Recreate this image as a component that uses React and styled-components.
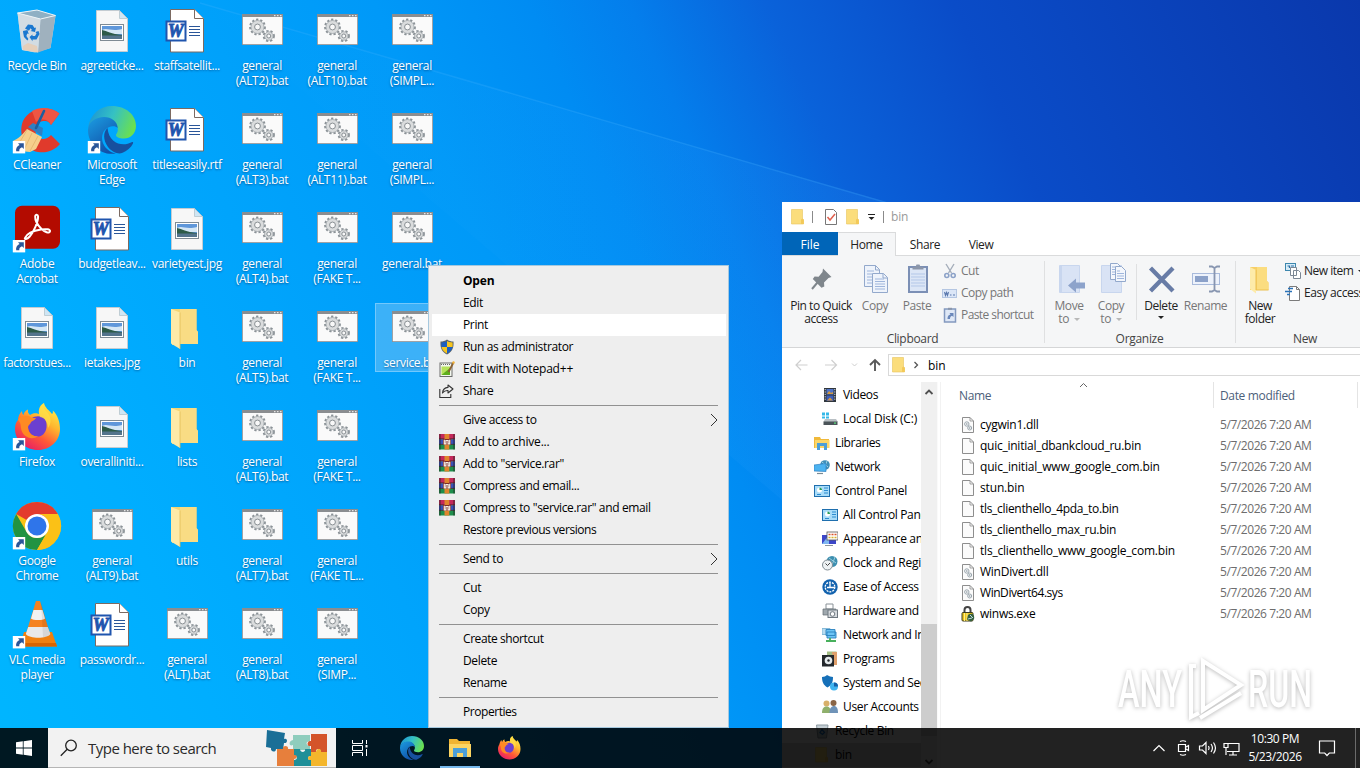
import React from 'react'
import styled, { createGlobalStyle } from 'styled-components'

const GlobalStyle = createGlobalStyle`
  * {
    box-sizing: border-box;
  }

  body {
    margin: 0;
    overflow: hidden;
    font-family: 'Open Sans', 'Noto Sans', sans-serif;
    font-size: 12px;
    letter-spacing: -0.4px;
    color: #000;
  }

  svg {
    display: block;
    flex: none;
  }
`

const Screen = styled.div`
  position: relative;
  width: 1360px;
  height: 768px;
  overflow: hidden;
  background: linear-gradient(66deg, #00b6ff 0%, #00aeff 14%, #00a4fc 28%, #0099f8 42%, #008cf3 51%, #047eec 57%, #0a62da 65%, #0a4cc8 76%, #0a38ac 100%);
`

const Rays = styled.svg`
  position: absolute;
  inset: 0;
`

/* ---------- desktop ---------- */

const DesktopGrid = styled.div`
  position: relative;
  display: grid;
  grid-auto-flow: column;
  grid-template-rows: repeat(7, 99px);
  grid-auto-columns: 75px;
  width: max-content;
`

const Shortcut = styled.div`
  padding: 1px 0 0 1px;
  height: 69px;
  margin-top: 6px;
  background: ${p => (p.$selected ? 'rgba(120, 195, 245, 0.5)' : 'transparent')};
  box-shadow: ${p => (p.$selected ? 'inset 0 0 0 1px rgba(150, 215, 255, 0.6)' : 'none')};
`

const Picture = styled.div`
  width: 48px;
  height: 48px;
  margin-left: 12px;
`

const Caption = styled.div`
  margin: 3px -5px 0 -7px;
  color: #fff;
  line-height: 15px;
  text-align: center;
  white-space: pre;
  letter-spacing: -0.32px;
  text-shadow: 0 1px 2px rgba(0, 40, 90, 0.55);
`

const LinkArrow = () => (
  <g>
    <rect x="-0.2" y="35" width="12.4" height="12.4" fill="#fff" />
    <path d="M3.200 45.200c-.6-3 .8-5.300 3.400-6.300L5 37.300h5.800v5.800L9 41.300c-2 .7-2.900 2-2.700 3.900z" fill="#2a5699" />
  </g>
)

const Icon48 = ({ children, link }) => (
  <svg width="48" height="48" viewBox="0 0 48 48" overflow="visible">
    {children}
    {link && <LinkArrow />}
  </svg>
)

const RecycleBin = () => (
  <Icon48>
    <path d="M4.500 6 9 43l13 2.500L37.500 41 42.500 9 24 3z" fill="#cfd9df" opacity=".92" />
    <path d="M4.500 6 24 3l18.500 5.500-15 3.500z" fill="#8fb0c4" />
    <path d="M27.500 12 42.500 8.500 37.500 41 25 45.500z" fill="#9fb1be" />
    <path d="M4.500 6 27.500 12 25 45.500 9 43z" fill="#d4dde3" opacity=".9" />
    <path d="M4.500 6 24 3l18.500 5.500-15 3.500z" fill="none" stroke="#eef4f7" strokeWidth="1" />
    <path d="M10 39l5-3 9 3 1 6.500L10 43z" fill="#edc9a8" opacity=".7" />
    <g fill="#1a78d0">
      <path d="M12 21.500l3-4 4.500.5 2 3 1.500-.5-1 4.500-4.500-1 1.500-1-1.500-1.800-1.500 2.500z" />
      <path d="M10 24l4.500-1 1.200 4-1.500-.6-.8 2.500 2 3-1 1.500-3.400-3.400-.8-4z" />
      <path d="M16.500 30l3-2.500v1.500h2.500l1.500-2.500-1-1.500 3-1 1 3-3 5.500h-4v1.800z" />
    </g>
  </Icon48>
)

const Photo = () => (
  <Icon48>
    <path d="M8.500 3.500h23l8 8v33h-31z" fill="#f7f7f7" stroke="#c4ccd2" />
    <path d="M31.500 3.500v8h8z" fill="#cfe6f4" stroke="#b6c4cc" strokeWidth=".8" />
    <rect x="12.500" y="17.500" width="23" height="16" fill="#fff" stroke="#7f8b94" />
    <rect x="14" y="19" width="20" height="13" fill="#5f97da" />
    <path d="M14 23c5-3 9 2 20-1v5H14z" fill="#d5e7f5" />
    <path d="M14 23c5 1 9 4 20 5v1H14z" fill="#2d5a47" />
    <path d="M14 28.500h20V32H14z" fill="#54748c" />
  </Icon48>
)

const WordDoc = () => (
  <Icon48>
    <path d="M7.500 2.500h24l9 9v33.500h-33z" fill="#fff" stroke="#7b6a62" />
    <path d="M31.500 2.500v9h9" fill="#fff" stroke="#7b6a62" />
    <path d="M26 19.500h11M26 22.500h11M26 25.500h11M26 28.500h11" stroke="#2a5699" strokeWidth="1.200" />
    <rect x="3.500" y="14.500" width="19" height="19" fill="#fff" stroke="#1f55ae" strokeWidth="2" />
    <text x="4.800" y="30.200" fontFamily="Liberation Serif, serif" fontWeight="bold" fontStyle="italic" fontSize="18" letterSpacing="0" stroke="#1f55ae" strokeWidth=".9" fill="#1f55ae">W</text>
  </Icon48>
)

const Folder = () => (
  <Icon48>
    <path d="M8 5h25.500v21l1.500 2v12H16l-7 1z" fill="#f3d474" />
    <path d="M17 5h16.500v21l1.500 2v12H17z" fill="#f9dc84" />
    <path d="M8 5l9 3.500V45l-9-5.500z" fill="#fdeaa8" />
    <path d="M17 8.500V45" stroke="#e2bb55" strokeWidth=".8" />
  </Icon48>
)

const gear = (cx, cy, r) => (
  <g>
    <circle cx={cx} cy={cy} r={r} fill="none" stroke="#8b9297" strokeWidth="2.200" strokeDasharray="2.200 1.900" />
    <circle cx={cx} cy={cy} r={r - 0.800} fill="#dadcdd" stroke="#a2a8ac" strokeWidth=".8" />
    <circle cx={cx} cy={cy} r={r * 0.4} fill="#f8f8f8" stroke="#7e8589" strokeWidth=".9" />
  </g>
)

const Batch = () => (
  <Icon48>
    <rect x="4" y="7" width="41" height="31" fill="#8a8d90" />
    <rect x="4.800" y="10" width="39.400" height="27.200" fill="#fafafa" />
    <path d="M36 8.700h1.500M39 8.700h1.500M42 8.700h1.500" stroke="#e6e6e6" strokeWidth="1.200" />
    {gear(19.500, 20, 7.300)}
    {gear(30.800, 29, 5)}
  </Icon48>
)

const CCleaner = () => (
  <Icon48 link>
    <path d="M46.500 7.500C36-1 17 1 10 15c-5 12 1 29 15 31 9 1.500 17-2 22-8l-9-9c-5 6-13 5-15-1-2-8 3-14 9-13 3 0 5 2 6 4z" fill="#e03a2c" />
    <path d="M46.500 7.500C38 1 27 .5 19 5l4 11c5-4 12-3 15 3z" fill="#ee5644" />
    <path d="M14 23 29 31 23 43 17 46 7 45 0 35C5 33 10 28 14 23z" fill="#f6cf8c" />
    <path d="M14 24 5 39M19 27 11 44M25 30l-8 15" stroke="#e2b36c" strokeWidth=".8" />
    <path d="M15 21l5-4 10 5-1 8z" fill="#2f7fc2" />
    <path d="M31 5 23 22" stroke="#1c5f9e" strokeWidth="2.600" strokeLinecap="round" />
  </Icon48>
)

const EdgeArt = () => (
  <g>
    <defs>
      <linearGradient id="edgeTop" x1="0" x2="1" y1=".2" y2=".5">
        <stop offset="0" stopColor="#1c93d4" />
        <stop offset=".5" stopColor="#35c1c3" />
        <stop offset="1" stopColor="#6be04f" />
      </linearGradient>
      <linearGradient id="edgeSide" x1="0" x2=".6" y1="0" y2="1">
        <stop offset="0" stopColor="#1b9de2" />
        <stop offset="1" stopColor="#1150a8" />
      </linearGradient>
    </defs>
    <path d="M0 22C2 8 12 0 24 0c14 0 24 9 24 20 0 8-6 12.500-12 12.500-5 0-8-1.500-8-3.500 0-1 1.800-2 1.800-5.500 0-6-6-11.500-13.500-11.500C8 12 2 17 0 22z" fill="url(#edgeTop)" />
    <path d="M0 24c0-8 8-13 16-13 7.500 0 13 4 13.800 11C27 19 20 19.500 16 25c-5 8 0 20 12 22.500C13 50 0 39 0 24z" fill="url(#edgeSide)" />
    <path d="M19.500 22C15 26 15 34 20 41c4 5 10 7.500 14 6 5-2 9-5.500 11-9.500.6-1.200-.4-1.800-1.400-1.200C35 41 21 38 19.500 22z" fill="#17509f" />
  </g>
)

const Edge = () => (
  <Icon48 link>
    <EdgeArt />
  </Icon48>
)

const Acrobat = () => (
  <Icon48 link>
    <rect x="2" y=".7" width="45" height="43" rx="7" fill="#b30b00" />
    <path d="M12 33c2-4.500 9-7.500 16-8.500 5-.6 9.500-.4 9 1.800-.6 2.500-5.500.6-8.500-2.300-3.500-3.500-6.500-9-6.300-12.500.2-2.500 2.900-2.200 2.900.3 0 5-4 14.700-8.600 20-2.500 2.700-5.500 2.700-4.500 1.200z" fill="none" stroke="#fff" strokeWidth="2" strokeLinejoin="round" />
  </Icon48>
)

const FirefoxArt = () => (
  <g>
    <defs>
      <linearGradient id="foxBody" x1=".85" x2=".25" y1=".05" y2="1">
        <stop offset="0" stopColor="#fff04a" />
        <stop offset=".35" stopColor="#ffb52e" />
        <stop offset=".65" stopColor="#ff5a36" />
        <stop offset="1" stopColor="#e61a6a" />
      </linearGradient>
    </defs>
    <path d="M5 17c0-4 2-7 4-9 0 2 .5 3 1.500 4C11 9 13 7.500 15 6.500c-.5 2 .2 4 2 5.500 3-2.500 7-2 9-1C25 5 28 1.500 31 0c1 5 5 7 8 11 1-.5 1-2 .8-3.500C45 12 47 20 47 26c0 12-10 21-22 21S2 38 2 26c0-4 1-7 3-9z" fill="url(#foxBody)" />
    <path d="M15 21c2-7 9-9.500 15-6.500 3 2 4 6 3.500 10-.8 6-5 9.500-10 9-5-.3-9-4-8.500-12.500z" fill="#6b3fd0" />
    <path d="M5 17c1-3 5-5 11-4 2 2 4 2 7 2-1 2-3 2.500-5 4 0 2-3 3-3 5 0 5 4 10 10 9-6 5-16 1-17-8-.4-3 0-5-3-8z" fill="#ff8a23" />
    <path d="M27 14c5 1 8 5 8 11 4-5 3-12-1-16-3-3-4-5-3-9-4 3-6 8-4 14z" fill="#ffe14a" opacity=".7" />
  </g>
)

const Firefox = () => (
  <Icon48 link>
    <FirefoxArt />
  </Icon48>
)

const Chrome = () => (
  <Icon48 link>
    <circle cx="24" cy="24" r="24" fill="#fbc116" />
    <path d="M24 24 3.200 12A24 24 0 0 1 44.800 12z" fill="#e33b2e" />
    <path d="M13.600 30A12 12 0 0 0 34.400 30L24 48A24 24 0 0 1 3.200 12z" fill="#229342" />
    <path d="M44.800 12H24A12 12 0 0 1 34.400 30L24 48A24 24 0 0 0 44.800 12z" fill="#fbc116" />
    <circle cx="24" cy="24" r="12" fill="#fff" />
    <circle cx="24" cy="24" r="9.500" fill="#2f75ea" />
  </Icon48>
)

const Vlc = () => (
  <Icon48 link>
    <path d="M11 31h28l5 14.500H7z" fill="#f08010" />
    <path d="M7 44l1-2h35l1 3.500H7z" fill="#d96400" />
    <path d="M23 0h4l9.500 31c-2 5-21 5-23 0z" fill="#f58220" />
    <path d="M20.500 9h9l2.500 8.500c-2 2-12 2-14 0z" fill="#f2f2f2" />
    <path d="M15.200 26h19.600l2.500 7c-3 5-21 5-24.500 0z" fill="#e9e9e9" />
    <path d="M28 1l9 32c-1 2-4 3-7 3.300z" fill="#000" opacity=".08" />
  </Icon48>
)

const desktopItems = [
  ['Recycle Bin', RecycleBin],
  ['CCleaner', CCleaner],
  ['Adobe\nAcrobat', Acrobat],
  ['factorstues...', Photo],
  ['Firefox', Firefox],
  ['Google\nChrome', Chrome],
  ['VLC media\nplayer', Vlc],
  ['agreeticke...', Photo],
  ['Microsoft\nEdge', Edge],
  ['budgetleav...', WordDoc],
  ['ietakes.jpg', Photo],
  ['overalliniti...', Photo],
  ['general\n(ALT9).bat', Batch],
  ['passwordr...', WordDoc],
  ['staffsatellit...', WordDoc],
  ['titleseasily.rtf', WordDoc],
  ['varietyest.jpg', Photo],
  ['bin', Folder],
  ['lists', Folder],
  ['utils', Folder],
  ['general\n(ALT).bat', Batch],
  ['general\n(ALT2).bat', Batch],
  ['general\n(ALT3).bat', Batch],
  ['general\n(ALT4).bat', Batch],
  ['general\n(ALT5).bat', Batch],
  ['general\n(ALT6).bat', Batch],
  ['general\n(ALT7).bat', Batch],
  ['general\n(ALT8).bat', Batch],
  ['general\n(ALT10).bat', Batch],
  ['general\n(ALT11).bat', Batch],
  ['general\n(FAKE T...', Batch],
  ['general\n(FAKE T...', Batch],
  ['general\n(FAKE T...', Batch],
  ['general\n(FAKE TL...', Batch],
  ['general\n(SIMP...', Batch],
  ['general\n(SIMPL...', Batch],
  ['general\n(SIMPL...', Batch],
  ['general.bat', Batch],
  ['service.bat', Batch, true],
]

const Desktop = () => (
  <DesktopGrid>
    {desktopItems.map(([name, Art, selected], i) => (
      <Shortcut key={i} $selected={selected}>
        <Picture><Art /></Picture>
        <Caption>{name}</Caption>
      </Shortcut>
    ))}
  </DesktopGrid>
)

/* ---------- explorer window ---------- */

const Window = styled.div`
  position: absolute;
  left: 782px;
  top: 202px;
  width: 640px;
  height: 566px;
  display: flex;
  flex-direction: column;
  background: #fff;
`

const TitleBar = styled.div`
  display: flex;
  align-items: center;
  height: 30px;
  padding: 0 0 1px 8px;
  color: #999;
  letter-spacing: -0.2px;
`

const TitleRule = styled.span`
  width: 1px;
  height: 12px;
  margin: 0 ${p => p.$after}px 0 ${p => p.$before}px;
  background: #8a8a8a;
`

const TitleGap = styled.span`
  width: 6px;
`

const Tabs = styled.div`
  display: flex;
  height: 24px;
  border-bottom: 1px solid #dadbdc;
`

const Tab = styled.div`
  width: ${p => p.$width}px;
  height: ${p => (p.$current ? 24 : 23)}px;
  line-height: ${p => (p.$current ? 23 : 25)}px;
  text-align: center;
  letter-spacing: ${p => (p.$file ? 0 : -0.4)}px;
  color: ${p => (p.$file ? '#fff' : '#222')};
  background: ${p => (p.$file ? '#0065b8' : p.$current ? '#f5f6f7' : 'transparent')};
  border: 0 solid #dadbdc;
  border-width: ${p => (p.$current ? '1px 1px 0 0' : '0')};
`

const Ribbon = styled.div`
  display: flex;
  height: 92px;
  background: #f5f6f7;
  border-bottom: 1px solid #d5d6d7;
`

const Group = styled.div`
  display: flex;
  flex-direction: column;
  flex: none;
  width: ${p => p.$width}px;
  padding-left: ${p => p.$indent}px;
  background: linear-gradient(#dfe0e1, #dfe0e1) no-repeat right 5px / 1px 82px;
`

const GroupRow = styled.div`
  display: flex;
  height: 74px;
`

const GroupName = styled.div`
  margin-left: -${p => p.$indent + 2}px;
  line-height: 17px;
  text-align: center;
  color: #444;
  letter-spacing: -0.3px;
`

const BigButton = styled.div`
  display: flex;
  flex-direction: column;
  align-items: center;
  flex: none;
  width: ${p => p.$width}px;
  padding-top: 7px;
  line-height: 13px;
  text-align: center;
  white-space: pre;
  color: ${p => (p.$disabled ? '#777' : '#222')};
  letter-spacing: -0.45px;

  svg + span {
    margin-top: 4px;
  }
`

const Rule = styled.div`
  width: 1px;
  height: 56px;
  margin: 8px ${p => p.$after}px 0 5px;
  background: #dfe0e1;
`

const SmallList = styled.div`
  display: flex;
  flex-direction: column;
  padding: 4px 0 0 ${p => p.$indent || 0}px;
`

const SmallButton = styled.div`
  display: flex;
  align-items: center;
  height: 22px;
  padding-bottom: 1px;
  white-space: nowrap;
  letter-spacing: ${p => p.$tracking || -0.5}px;
  color: ${p => (p.$disabled ? '#777' : '#222')};

  svg + span {
    margin-left: 3px;
  }
`

const Caret = styled.i`
  display: inline-block;
  width: 0;
  height: 0;
  margin: 0 0 ${p => p.$lift || 2}px ${p => p.$gap || 0}px;
  border: 3px solid transparent;
  border-top-color: ${p => (p.$dim ? '#b8b8b8' : '#222')};
  border-bottom-width: 0;
`

const AddressRow = styled.div`
  display: flex;
  align-items: center;
  height: 34px;
  padding-left: 12px;
`

const AddressBox = styled.div`
  display: flex;
  align-items: center;
  gap: 6px;
  width: 500px;
  height: 22px;
  margin-left: 6px;
  padding-left: 2px;
  border: 1px solid #d9d9d9;
  letter-spacing: -0.1px;
`

const Crumb = styled.span`
  margin-left: 3px;
`

const Body = styled.div`
  display: flex;
  flex: 1;
  min-height: 0;
`

const NavTree = styled.div`
  width: 139px;
  padding-top: 1px;
  overflow: hidden;
`

const NavItem = styled.div`
  display: flex;
  align-items: center;
  height: 24px;
  padding: 0 0 1px ${p => (p.$depth ? 40 : 32)}px;
  gap: 5px;
  white-space: nowrap;
  letter-spacing: ${p => p.$tracking || -0.35}px;
  background: ${p => (p.$selected ? '#d9d9d9' : 'transparent')};
`

const ScrollBar = styled.div`
  display: flex;
  flex-direction: column;
  align-items: center;
  width: 17px;
  background: #f0f0f0;
  border-right: 1px solid #fafafa;
`

const ScrollThumb = styled.div`
  width: 16px;
  height: 112px;
  margin: 222px 0 auto;
  background: #cdcdcd;
`

const FilePane = styled.div`
  flex: 1;
  border-left: 1px solid #f2f2f2;
  margin-left: 2px;
`

const HeaderRow = styled.div`
  display: flex;
  height: 26px;
  margin-bottom: 6px;
  color: #4c607a;
  line-height: 28px;
  letter-spacing: -0.35px;
`

const HeadCell = styled.div`
  display: flex;
  width: ${p => p.$width}px;
  padding-left: ${p => p.$indent}px;
  border-right: 1px solid #e4e4e4;
`

const HeadLabel = styled.span`
  width: 120px;
`

const FileRow = styled.div`
  display: flex;
  align-items: center;
  height: 21px;
  padding-left: 19px;
`

const FileName = styled.span`
  width: 240px;
  margin-left: 4px;
  letter-spacing: ${p => p.$tracking || -0.25}px;
`

const FileDate = styled.span`
  color: #6d6d6d;
  letter-spacing: -0.43px;
`

const Icon16 = ({ children, size = 16 }) => (
  <svg width={size} height={size} viewBox="0 0 16 16">{children}</svg>
)

const SmallFolder = () => (
  <Icon16>
    <path d="M1.500.5h11v9.500l1 1V15h-12z" fill="#fbdd7c" stroke="#e8c45c" strokeWidth=".6" />
    <path d="M11 10.500l1.500-1 1.300 1V15H11z" fill="#f3c959" />
  </Icon16>
)

const QuickCheck = () => (
  <Icon16>
    <path d="M2.500.5h8l3 3v12h-11z" fill="#fff" stroke="#777" />
    <path d="M4.500 8l2.500 3 5-6" fill="none" stroke="#e0604e" strokeWidth="1.500" />
  </Icon16>
)

const Page = ({ gears }) => (
  <Icon16>
    <path d="M2.500.5h7.500l3.500 3.500v11.500h-11z" fill="#fbfbfb" stroke="#8e8e8e" />
    <path d="M10 .5V4h3.500" fill="none" stroke="#8e8e8e" strokeWidth=".8" />
    {gears && (
      <g fill="none" stroke="#9aa6ae" strokeWidth="1">
        <circle cx="6.800" cy="7" r="2.200" />
        <circle cx="9.700" cy="11" r="2" />
        <circle cx="6.800" cy="7" r=".5" />
        <circle cx="9.700" cy="11" r=".5" />
      </g>
    )}
  </Icon16>
)

const LockExe = () => (
  <Icon16>
    <path d="M4.500 7V4a3 3 0 0 1 6 0v3" fill="none" stroke="#444" strokeWidth="2" />
    <rect x="2" y="6.500" width="11" height="8.500" rx="1" fill="#e9c31c" stroke="#3a3a20" />
    <path d="M4.500 7v8M7 7v8" stroke="#fff08a" />
    <path d="M8 9c4-3 7 0 6 4l-3 2.500-4-2z" fill="#35603f" />
    <path d="M10 9l3 3M8 13l4-1" stroke="#b9d7de" />
  </Icon16>
)

const PinIcon = () => (
  <svg width="32" height="32" viewBox="0 0 32 32">
    <path d="M18 5.500 26.500 14l-3 1-4.500 4.500.3 4-2.800 1.300L7.800 16l1.800-2.500 4 .3L17.500 9z" fill="#7f868c" />
    <path d="M12.500 19.500 7 26" stroke="#7f868c" strokeWidth="2" />
  </svg>
)

const CopyIcon = () => (
  <svg width="32" height="32" viewBox="0 0 32 32">
    <g fill="#eef3fb" stroke="#93a9cc">
      <path d="M5.500 2.500h11l4 4v17h-15z" />
      <path d="M13.500 10.500h11l4 4v15h-15z" />
    </g>
    <path d="M8 8h7M8 11h5M8 14h5M8 17h5M8 20h5M16 16h9M16 18.500h10M16 21h10M16 23.500h10M16 26h10" stroke="#9fb6dc" />
    <path d="M24 10.500v4.500h4.500M16.500 2.500V7h4" fill="none" stroke="#93a9cc" />
  </svg>
)

const PasteIcon = () => (
  <svg width="32" height="32" viewBox="0 0 32 32">
    <rect x="8" y="4" width="18" height="25" fill="#dce6f6" stroke="#7b8fb5" strokeWidth="2" />
    <path d="M11.500 6.500V4h3l1-2.500h3l1 2.500h3v2.500z" fill="#8b96aa" />
    <path d="M10 11h14M10 14h14M10 17h14M10 20h14M10 23h14" stroke="#b3c7e8" />
  </svg>
)

const ScissorsIcon = () => (
  <Icon16>
    <path d="M4 1l5.500 9M12 1 6.500 10" stroke="#a4adba" strokeWidth="1.400" />
    <g fill="none" stroke="#8ca2c8" strokeWidth="1.600">
      <circle cx="4.800" cy="12.500" r="2" />
      <circle cx="11.200" cy="12.500" r="2" />
    </g>
  </Icon16>
)

const PathIcon = () => (
  <Icon16>
    <rect x=".5" y="4.500" width="14" height="8" fill="#dbe6f7" stroke="#b4c6e2" />
    <path d="M2.500 7l1 3.500 1-3 1 3 1-3.500M8 10h1.500M11 10h2" fill="none" stroke="#5b79ae" strokeWidth="1.100" />
  </Icon16>
)

const PasteLinkIcon = () => (
  <Icon16>
    <rect x="2.500" y="2" width="11" height="13" fill="#dfe8f6" stroke="#8399bf" strokeWidth="1.500" />
    <path d="M6 .8h4v2H6z" fill="#8b96aa" />
    <path d="M5.500 12c0-3 1-4 3-4.500L7.500 6h4v4L10 8.800C8.500 9.500 8 10.500 8 12z" fill="#6a87ba" />
  </Icon16>
)

const MoveIcon = () => (
  <svg width="32" height="32" viewBox="0 0 32 32">
    <path d="M6.500 2.500h20v27h-20z" fill="#d9e3f5" stroke="#c8d6ee" />
    <path d="M8 3v26" stroke="#b7c9e8" />
    <path d="M15 22.500l8-7v4h9v6h-9v4z" fill="#8da3cb" />
  </svg>
)

const CopyToIcon = () => (
  <svg width="32" height="32" viewBox="0 0 32 32">
    <path d="M6.500 2.500h20v27h-20z" fill="#d9e3f5" stroke="#c8d6ee" />
    <g fill="#f4f7fc" stroke="#93a9cc">
      <path d="M15.500.5h7l4 4v12h-11z" />
      <path d="M20.500 3.500h6l4 4v11h-10z" />
    </g>
    <path d="M22 8h3M22 10.500h7M22 13h7M22 15.500h7M17 4h3M17 6.500h3M17 9h3M17 11.500h3" stroke="#9fb6dc" />
  </svg>
)

const DeleteIcon = () => (
  <svg width="32" height="32" viewBox="0 0 32 32">
    <path d="M5.500 5l22.500 23M28 5 5.500 28" stroke="#687ca6" strokeWidth="4.300" />
  </svg>
)

const RenameIcon = () => (
  <svg width="32" height="32" viewBox="0 0 32 32">
    <rect x="2.500" y="10.500" width="27" height="11" fill="#edf2fb" stroke="#a8badb" />
    <rect x="5" y="13" width="13" height="6" fill="#8ba1c9" />
    <path d="M19 3.500h3l2.500 1.500L27 3.500h3M24.500 5v22M19 28.500h3l2.500-1.500 2.500 1.500h3" fill="none" stroke="#8795b0" strokeWidth="1.800" />
  </svg>
)

const NewFolderIcon = () => (
  <svg width="32" height="32" viewBox="0 0 32 32">
    <path d="M6 4h17v14l1.500 1.500V27H6z" fill="#f7cf66" />
    <path d="M13 4h10v14l1.500 1.500V27H13z" fill="#fbdd80" />
    <path d="M6 4l6 3v23.500L6 26z" fill="#fdeba9" />
    <path d="M12 7v20h12.500" fill="none" stroke="#ecc050" />
  </svg>
)

const NewItemIcon = () => (
  <Icon16>
    <rect x=".5" y=".5" width="10" height="7" fill="#d6ecf8" stroke="#3d87ae" />
    <path d="M2.500 3h2v2M6 3h3" fill="none" stroke="#2a6fa5" strokeWidth="1.200" />
    <path d="M5.500 4.500h6v8h-6zM8.500 7.500h5l2 2v6h-7z" fill="#fff" stroke="#7b8794" />
  </Icon16>
)

const EasyAccessIcon = () => (
  <Icon16>
    <path d="M4.500 1.500h7l3 3v11h-10z" fill="#fff" stroke="#7b7b7b" />
    <path d="M11.500 1.500v3h3" fill="none" stroke="#7b7b7b" />
    <path d="M3 3.500h5M0 6.500h7M2 9.500h3" stroke="#2a72b8" strokeWidth="1.500" />
  </Icon16>
)

/* one drawing per entry of the navigation tree */
const navArt = {
  videos: (
    <Icon16>
      <rect x="2" y="1" width="12" height="14" fill="#30363c" />
      <path d="M3.200 2v12M12.800 2v12" stroke="#d7dde2" strokeDasharray="1.200 1.200" />
      <rect x="4.500" y="2" width="7" height="5.500" fill="#4f74c8" />
      <rect x="4.500" y="8.500" width="7" height="5.500" fill="#3e5fb8" />
      <path d="M5 7l2-3 2 2 2-1v2zM5 13.500l3-3 3 3z" fill="#d89a3c" />
    </Icon16>
  ),
  disk: (
    <Icon16>
      <path d="M0 1.500h3v3H0zM4 1.500h3v3H4zM0 5.500h3v2H0zM4 5.500h3v2H4z" fill="#35b8e8" />
      <path d="M3 8h11l2 3H1.500z" fill="#b9c0c4" />
      <rect x="1.500" y="10.500" width="14" height="3.500" fill="#4b5459" />
      <rect x="12" y="11.500" width="2" height="1.200" fill="#5be07d" />
    </Icon16>
  ),
  libraries: (
    <Icon16>
      <path d="M0 2h6l1 2h8v9H0z" fill="#f0b93a" />
      <path d="M1 5h14.500v8H1z" fill="#fcd769" />
      <path d="M3 8h10v7h-3v-4H6v4H3z" fill="#4c9fd8" />
    </Icon16>
  ),
  network: (
    <Icon16>
      <circle cx="11" cy="6" r="4.800" fill="#3f8fb8" />
      <path d="M8 3l6 5M13 2l-3 8" stroke="#9fd4e6" />
      <path d="M0 6l12-1.500v8L0 12z" fill="#4cb3f0" stroke="#2e7fc0" strokeWidth=".7" />
      <path d="M3 14.500h6" stroke="#7a8a94" strokeWidth="1.200" />
    </Icon16>
  ),
  panel: (
    <Icon16>
      <rect x=".5" y="2.500" width="15" height="11" fill="#a9dcf9" stroke="#1f6fae" />
      <circle cx="5.500" cy="7" r="2.500" fill="#fff" />
      <path d="M5.500 7V4.500a2.500 2.500 0 0 1 2.500 2.500z" fill="#2a9d5a" />
      <path d="M10 5h4M10 7.500h4M10 10h4M3 11.500h4" stroke="#2d8cd0" strokeWidth="1.200" />
    </Icon16>
  ),
  appearance: (
    <Icon16>
      <rect x="0" y="4" width="14" height="9" fill="#3c46c8" />
      <path d="M0 13l7-9v9z" fill="#7fb7f2" />
      <rect x="5" y="1" width="11" height="8" fill="#fff" stroke="#555" strokeWidth=".8" />
      <path d="M6.500 3.500h2M9.500 3.500h2M12.500 3.500h2" stroke="#d9542b" strokeWidth="1.600" />
      <path d="M6.500 6.500h2M9.500 6.500h2M12.500 6.500h2" stroke="#d7b32f" strokeWidth="1.600" />
      <path d="M3 14.500h8" stroke="#8b959c" />
    </Icon16>
  ),
  clock: (
    <Icon16>
      <circle cx="10" cy="6.500" r="5.500" fill="#3c8fb0" />
      <path d="M7 3l7 5M13 2l-3 8" stroke="#9ccede" />
      <circle cx="5.500" cy="10" r="5" fill="#eef2f4" stroke="#7f8b92" />
      <path d="M3.500 8.500l2 2 2.500-2.500" fill="none" stroke="#444" />
    </Icon16>
  ),
  ease: (
    <Icon16>
      <circle cx="8" cy="8" r="7.700" fill="#1262ae" />
      <circle cx="8" cy="8" r="4.800" fill="none" stroke="#fff" strokeWidth="1.300" strokeDasharray="2 1" />
      <path d="M8 4v4.500h4M5 8.500h3" fill="none" stroke="#fff" strokeWidth="1.300" />
    </Icon16>
  ),
  hardware: (
    <Icon16>
      <path d="M4 1h7v5H4z" fill="#fff" stroke="#8a9298" />
      <path d="M1 6h13v6H1z" fill="#9fa8ae" stroke="#616a70" strokeWidth=".7" />
      <rect x="6" y="7" width="9.500" height="7.500" fill="#d6dade" stroke="#6f7880" />
      <circle cx="10.500" cy="11" r="2.300" fill="#fff" stroke="#6f7880" />
    </Icon16>
  ),
  internet: (
    <Icon16>
      <path d="M0 1.500h8v6H0z" fill="#b8dcf0" stroke="#7fb4d4" strokeWidth=".9" />
      <path d="M4 2.500h9v6H4zM5 5h9v6H5z" fill="#6cc4f4" stroke="#2b82be" strokeWidth=".9" />
      <path d="M8 11v3M4 14h10" stroke="#48b05c" strokeWidth="1.800" />
    </Icon16>
  ),
  programs: (
    <Icon16>
      <rect x="5" y=".5" width="9.500" height="12" fill="#a3bd85" />
      <path d="M10 1h5v13h-3z" fill="#df9f6b" />
      <rect x="0" y="4" width="12" height="11.500" fill="#23282c" />
      <circle cx="6.500" cy="9.500" r="3.800" fill="#e5eaec" />
      <circle cx="6.500" cy="9.500" r="1.200" fill="#23282c" />
    </Icon16>
  ),
  security: (
    <Icon16>
      <path d="M0 2c2 0 4-1 5-2 2 1 4 2 6 2 0 5-1 8-5.500 10.500C1 10 0 6 0 2z" fill="#1670b8" />
      <circle cx="12" cy="11.500" r="4" fill="#3fb4f0" />
      <path d="M12 11.500V7.500a4 4 0 0 1 4 4z" fill="#155fa6" />
    </Icon16>
  ),
  users: (
    <Icon16>
      <circle cx="4.500" cy="4.500" r="3" fill="#d8b06a" />
      <path d="M0 14c0-5 2-6.500 4.500-6.500S9 9 9 14z" fill="#8fb06c" />
      <circle cx="11.500" cy="4" r="3" fill="#8a6546" />
      <path d="M7.500 14c0-5 2-7 4.500-7s4 2 4 7z" fill="#6f93b8" />
    </Icon16>
  ),
  recycle: (
    <Icon16>
      <path d="M2.500 2h11.500l-1.500 13H4z" fill="#c4ced4" stroke="#8d9aa2" />
      <path d="M6 9.500l2-3 2.500 3-2 2z" fill="none" stroke="#1b74c4" strokeWidth="1.300" />
    </Icon16>
  ),
  folder: <SmallFolder />,
}

const navItems = [
  ['Videos', 'videos', 1],
  ['Local Disk (C:)', 'disk', 1, -0.18],
  ['Libraries', 'libraries', 0],
  ['Network', 'network', 0],
  ['Control Panel', 'panel', 0, -0.28],
  ['All Control Panel Items', 'panel', 1],
  ['Appearance and Personalization', 'appearance', 1],
  ['Clock and Region', 'clock', 1, -0.22],
  ['Ease of Access', 'ease', 1],
  ['Hardware and Sound', 'hardware', 1],
  ['Network and Internet', 'internet', 1],
  ['Programs', 'programs', 1],
  ['System and Security', 'security', 1],
  ['User Accounts', 'users', 1],
  ['Recycle Bin', 'recycle', 0],
  ['bin', 'folder', 0],
]

const files = [
  ['cygwin1.dll', <Page gears />],
  ['quic_initial_dbankcloud_ru.bin', <Page />],
  ['quic_initial_www_google_com.bin', <Page />, -0.17],
  ['stun.bin', <Page />, -0.15],
  ['tls_clienthello_4pda_to.bin', <Page />, -0.31],
  ['tls_clienthello_max_ru.bin', <Page />, -0.29],
  ['tls_clienthello_www_google_com.bin', <Page />, -0.2],
  ['WinDivert.dll', <Page gears />],
  ['WinDivert64.sys', <Page gears />, -0.45],
  ['winws.exe', <LockExe />],
]

const Explorer = () => (
  <Window>
    <TitleBar>
      <SmallFolder />
      <TitleRule $before={6} $after={10} />
      <QuickCheck />
      <TitleGap />
      <SmallFolder />
      <svg width="20" height="10" viewBox="0 0 20 10">
        <path d="M7 2.500h7" stroke="#222" />
        <path d="M7.500 5h6l-3 3z" fill="#222" />
      </svg>
      <TitleRule $before={2} $after={7} />
      bin
    </TitleBar>
    <Tabs>
      <Tab $width={56} $file>File</Tab>
      <Tab $width={58} $current>Home</Tab>
      <Tab $width={58}>Share</Tab>
      <Tab $width={54}>View</Tab>
    </Tabs>
    <Ribbon>
      <Group $width={263} $indent={2}>
        <GroupRow>
          <BigButton $width={74}><PinIcon /><span>{'Pin to Quick\naccess'}</span></BigButton>
          <BigButton $width={34} $disabled><CopyIcon /><span>Copy</span></BigButton>
          <BigButton $width={50} $disabled><PasteIcon /><span>Paste</span></BigButton>
          <SmallList>
            <SmallButton $disabled><ScissorsIcon /><span>Cut</span></SmallButton>
            <SmallButton $disabled><PathIcon /><span>Copy path</span></SmallButton>
            <SmallButton $disabled $tracking={-0.58}><PasteLinkIcon /><span>Paste shortcut</span></SmallButton>
          </SmallList>
        </GroupRow>
        <GroupName $indent={2}>Clipboard</GroupName>
      </Group>
      <Group $width={191} $indent={2}>
        <GroupRow>
          <BigButton $width={44} $disabled><MoveIcon /><span>{'Move\nto '}<Caret $dim $gap={2} /></span></BigButton>
          <BigButton $width={40} $disabled><CopyToIcon /><span>{'Copy\nto '}<Caret $dim $gap={2} /></span></BigButton>
          <Rule $after={3} />
          <BigButton $width={42}><DeleteIcon /><span>{'Delete\n'}<Caret $lift={4} /></span></BigButton>
          <BigButton $width={47} $disabled><RenameIcon /><span>Rename</span></BigButton>
        </GroupRow>
        <GroupName $indent={2}>Organize</GroupName>
      </Group>
      <Group $width={140} $indent={3}>
        <GroupRow>
          <BigButton $width={42}><NewFolderIcon /><span>{'New\nfolder'}</span></BigButton>
          <SmallList $indent={4}>
            <SmallButton><NewItemIcon /><span>New item <Caret $gap={2} /></span></SmallButton>
            <SmallButton $tracking={-0.42}><EasyAccessIcon /><span>Easy access <Caret /></span></SmallButton>
          </SmallList>
        </GroupRow>
        <GroupName $indent={3}>New</GroupName>
      </Group>
    </Ribbon>
    <AddressRow>
      <svg width="88" height="16" viewBox="0 0 88 16" fill="none">
        <path d="M13.500 8H2M7 3 2 8l5 5M31 8h11.500M37.500 3l5 5-5 5" stroke="#cfcfcf" strokeWidth="1.200" />
        <path d="M58 6.500l2.500 2.500L63 6.500" stroke="#cfcfcf" />
        <path d="M81 14V3M76 8l5-5 5 5" stroke="#5a5a5a" strokeWidth="1.900" />
      </svg>
      <AddressBox>
        <SmallFolder />
        <svg width="6" height="8" viewBox="0 0 6 8"><path d="M1.500 1l3 3-3 3" fill="none" stroke="#555" strokeWidth="1.300" /></svg>
        <Crumb>bin</Crumb>
      </AddressBox>
    </AddressRow>
    <Body>
      <NavTree>
        {navItems.map(([label, art, depth, tracking]) => (
          <NavItem key={label} $depth={depth} $tracking={tracking} $selected={label === 'bin'}>
            {navArt[art]}
            <span>{label}</span>
          </NavItem>
        ))}
      </NavTree>
      <ScrollBar>
        <svg width="16" height="20" viewBox="0 0 16 20"><path d="M4.500 12 8 8.500l3.500 3.500" fill="none" stroke="#505050" strokeWidth="1.800" /></svg>
        <ScrollThumb />
        <svg width="16" height="16" viewBox="0 0 16 16"><path d="M4.500 8 8 11.500 11.500 8" fill="none" stroke="#505050" strokeWidth="1.800" /></svg>
      </ScrollBar>
      <FilePane>
        <HeaderRow>
          <HeadCell $width={273} $indent={18}>
            <HeadLabel>Name</HeadLabel>
            <svg width="9" height="6" viewBox="0 0 9 6"><path d="M1 5l3.500-3.500L8 5" fill="none" stroke="#666" /></svg>
          </HeadCell>
          <HeadCell $width={144} $indent={6}>Date modified</HeadCell>
        </HeaderRow>
        {files.map(([name, icon, tracking]) => (
          <FileRow key={name}>
            {icon}
            <FileName $tracking={tracking}>{name}</FileName>
            <FileDate>5/7/2026 7:20 AM</FileDate>
          </FileRow>
        ))}
      </FilePane>
    </Body>
  </Window>
)

const Watermark = styled.svg`
  position: absolute;
  left: 1110px;
  top: 650px;
  filter: drop-shadow(0 1px 2px rgba(0, 0, 0, 0.28));
`

const AnyRun = () => (
  <Watermark width="212" height="78" viewBox="0 0 212 78" fill="#fff" fontFamily="Roboto, sans-serif" fontSize="51" fontWeight="500" letterSpacing="0">
    <text x="8" y="57" textLength="64" lengthAdjust="spacingAndGlyphs">ANY</text>
    <text x="138" y="57" textLength="64" lengthAdjust="spacingAndGlyphs">RUN</text>
    <g fill="none" stroke="#fff" strokeWidth="4">
      <path d="M93 11l38 24-38 25z" />
      <path d="M86 16h-5v51l8-4M90 68l41-25" />
    </g>
  </Watermark>
)

/* ---------- context menu ---------- */

const Menu = styled.div`
  position: absolute;
  left: 428px;
  top: 265px;
  width: 301px;
  height: 463px;
  padding: 4px 2px 3px 3px;
  background: #eee;
  border: 1px solid #a5c8de;
`

const MenuItem = styled.div`
  display: flex;
  align-items: center;
  height: 22px;
  padding: 0 8px 0 7px;
  font-weight: ${p => (p.$bold ? 700 : 400)};
  background: ${p => (p.$hover ? '#fff' : 'transparent')};
  letter-spacing: ${p => p.$tracking || -0.36}px;
  white-space: nowrap;
`

const MenuIcon = styled.div`
  width: 24px;
`

const MenuLabel = styled.span`
  flex: 1;
  padding-bottom: 2px;
`

const MenuRule = styled.div`
  height: 1px;
  margin: 3px 8px 3px 7px;
  background: #919191;
`

const Shield = () => (
  <Icon16>
    <path d="M8 .5c2 1.500 4 2 6.500 2C15 9 13 13 8 15.500 3 13 1 9 1.500 2.500 4 2.500 6 2 8 .5z" fill="#59636b" />
    <path d="M8 2v6H2.500c-.2-1.500-.2-3 0-4.500C5 3.400 6.500 3 8 2zM8 8h5.500c-.7 3-2.500 5-5.500 6.500z" fill="#1d5fc0" />
    <path d="M8 2v6h5.500c.2-1.500.2-3 0-4.500C11 3.400 9.500 3 8 2zM8 8H2.500c.7 3 2.500 5 5.500 6.500z" fill="#f7c51d" />
  </Icon16>
)

const Notepad = () => (
  <Icon16>
    <rect x="1" y="2" width="12" height="13.500" fill="#f3f7ee" stroke="#6c6c6c" />
    <rect x="2.500" y="5.500" width="8.500" height="8.500" fill="#b5e25a" />
    <path d="M2.500 14l8.500-7v7z" fill="#5fae1c" />
    <path d="M2 3.500h9" stroke="#666" strokeDasharray="1 1" />
    <path d="M14.500 1.500 9.500 11" stroke="#8a6234" strokeWidth="1.800" />
    <path d="M14 0l2 1-1 2-2-1z" fill="#f3b43c" />
  </Icon16>
)

const ShareIcon = () => (
  <Icon16>
    <path d="M.8 6v8.500h11V11" fill="none" stroke="#333" strokeWidth="1.100" />
    <path d="M9 2l5 4-5 4V7.500C6.500 7.300 5 8 3.500 10 3.800 6.500 6 4.600 9 4.400z" fill="none" stroke="#333" strokeWidth="1.100" strokeLinejoin="round" />
  </Icon16>
)

const Rar = () => (
  <Icon16>
    <rect width="16" height="5" fill="#c4285a" />
    <rect y="5.300" width="16" height="5" fill="#3950b8" />
    <rect y="10.600" width="16" height="4.900" fill="#1e8f4c" />
    <path d="M0 5h16M0 10.400h16M1 0v15.500M15 0v15.500" stroke="#26201f" strokeWidth=".8" />
    <rect x="5.500" width="4.800" height="15.500" fill="#e0852d" />
    <rect x="4" y="5" width="8" height="5.600" fill="#7d2b2b" />
    <path d="M5.300 5.800v4h1.600V6.500h2.200v3.300h1.600v-4" fill="none" stroke="#f4efe6" strokeWidth="1.200" />
  </Icon16>
)

const menuItems = [
  { label: 'Open', bold: true, tracking: -0.2 },
  { label: 'Edit' },
  { label: 'Print', hover: true },
  { label: 'Run as administrator', icon: <Shield /> },
  { label: 'Edit with Notepad++', icon: <Notepad />, tracking: -0.2 },
  { label: 'Share', icon: <ShareIcon /> },
  null,
  { label: 'Give access to', sub: true },
  { label: 'Add to archive...', icon: <Rar />, tracking: -0.2 },
  { label: 'Add to "service.rar"', icon: <Rar /> },
  { label: 'Compress and email...', icon: <Rar /> },
  { label: 'Compress to "service.rar" and email', icon: <Rar /> },
  { label: 'Restore previous versions', tracking: -0.44 },
  null,
  { label: 'Send to', sub: true },
  null,
  { label: 'Cut' },
  { label: 'Copy' },
  null,
  { label: 'Create shortcut', tracking: -0.42 },
  { label: 'Delete' },
  { label: 'Rename' },
  null,
  { label: 'Properties', tracking: -0.45 },
]

const ContextMenu = () => (
  <Menu>
    {menuItems.map((item, i) => item ? (
      <MenuItem key={i} $bold={item.bold} $hover={item.hover} $tracking={item.tracking}>
        <MenuIcon>{item.icon}</MenuIcon>
        <MenuLabel>{item.label}</MenuLabel>
        {item.sub && (
          <svg width="8" height="14" viewBox="0 0 8 14"><path d="M1 1l6 6-6 6" fill="none" stroke="#333" /></svg>
        )}
      </MenuItem>
    ) : <MenuRule key={i} />)}
  </Menu>
)

/* ---------- taskbar ---------- */

const Taskbar = styled.div`
  position: absolute;
  left: 0;
  right: 0;
  bottom: 0;
  display: flex;
  height: 40px;
  background: rgba(0, 0, 0, 0.865);
`

const TaskButton = styled.div`
  display: flex;
  align-items: center;
  justify-content: center;
  width: ${p => p.$width}px;
  height: 40px;
  border-bottom: ${p => (p.$open ? '2px solid #76b9ed' : '0')};
  padding-top: ${p => (p.$open ? 2 : 0)}px;
`

const Search = styled.div`
  display: flex;
  align-items: center;
  width: 288px;
  height: 40px;
  padding: 0 7px 0 11px;
  background: #f2f2f2;
  border-bottom: 1px solid #b5b5b5;
  color: #2b2b2b;
  font-size: 15px;
  letter-spacing: -0.52px;

  span {
    flex: 1;
    margin-left: 9px;
  }
`

const Tray = styled.div`
  display: flex;
  align-items: center;
  margin-left: auto;
`

const Clock = styled.div`
  width: 72px;
  margin-left: -1px;
  color: #fff;
  line-height: 18px;
  text-align: center;
  letter-spacing: -0.4px;
`

const ShowDesktop = styled.div`
  width: 5px;
  height: 40px;
  margin-left: 19px;
  border-left: 1px solid #6b6b6b;
`

const Notice = styled.svg`
  margin-left: 7px;
`

const Puzzle = () => (
  <svg width="64" height="38" viewBox="0 0 64 38">
    <path d="M2 1l18 3-1 6c4-2 4 5 0 4l-1 7-7-1c0 4-6 3-5-1l-5-1z" fill="#1a6f97" />
    <path d="M28 6h17v7c-4-2-5 4 0 4v4H28v-5c-4 2-5-4 0-5z" fill="#8fcdbd" />
    <path d="M46 5h16v18h-6c0-4-6-4-5 0h-5v-6c-5 1-4-6 0-5z" fill="#d4542a" />
    <path d="M12 20h6c-1-4 6-4 5 0h6v6c4-2 4 4 0 4v7H12z" fill="#e77f3c" />
    <path d="M29 20h6c0 4 6 4 5 0h6v7c-4-1-4 5 0 4v6H29v-6c4 0 4-6 0-5z" fill="#1f8f98" />
    <path d="M46 23h5c0-4 6-4 5 0h6v14H46v-6c-4 1-4-5 0-4z" fill="#f4b62c" />
  </svg>
)

const Bar = () => (
  <Taskbar>
    <TaskButton $width={48}>
      <svg width="16" height="16" viewBox="0 0 16 16" fill="#fff">
        <path d="M0 2.300 6.800 1.300v6.300H0zM7.600 1.200 16 0v7.600H7.600zM0 8.400h6.800v6.300L0 13.700zM7.600 8.400H16V16l-8.400-1.200z" />
      </svg>
    </TaskButton>
    <Search>
      <svg width="20" height="20" viewBox="0 0 20 20" fill="none" stroke="#222" strokeWidth="1.300">
        <circle cx="12" cy="7.500" r="5.300" />
        <path d="M8.200 11.300 1.800 17.700" />
      </svg>
      <span>Type here to search</span>
      <Puzzle />
    </Search>
    <TaskButton $width={48}>
      <svg width="18" height="18" viewBox="0 0 18 18" fill="none" stroke="#fff">
        <path d="M1.500 1v3.500h10V1M1.500 17v-3.500h10V17M1.500 6.500h10v5h-10zM15.500 1v4M15.500 10v7" />
        <path d="M14.500 6h2v2.500h-2z" fill="#fff" stroke="none" />
      </svg>
    </TaskButton>
    <TaskButton $width={56}>
      <svg width="24" height="24" viewBox="0 0 48 48"><EdgeArt /></svg>
    </TaskButton>
    <TaskButton $width={40} $open>
      <svg width="22" height="20" viewBox="0 0 22 20">
        <path d="M0 1h8l2 2h11v16H0z" fill="#f0b433" />
        <path d="M0 6h22v13H0z" fill="#fcd462" />
        <path d="M4 10h14v9h-4v-4H8v4H4z" fill="#4c9fd8" />
      </svg>
    </TaskButton>
    <TaskButton $width={58}>
      <svg width="24" height="24" viewBox="0 0 48 48"><FirefoxArt /></svg>
    </TaskButton>
    <Tray>
      <svg width="88" height="18" viewBox="0 0 88 18" fill="none" stroke="#fff" strokeWidth="1.200">
        <path d="M1.500 12 7 6.500l5.500 5.500" />
        <path d="M26.500 5.500h7v7h-7zM34 8l2.500-1.500v5L34 10M28 2.500c2-1 4-1 6 0M28 15.500c2 1 4 1 6 0" />
        <path d="M47.500 7h3l3.500-3.500v11L50.500 11h-3zM56.500 7c.8 1.300.8 2.700 0 4M59 5c1.800 2.500 1.800 5.500 0 8M61.500 3.500c2.500 3.500 2.500 7.500 0 11" />
        <path d="M75 4.500h12v8H75M81 12.500V16M77 16h8M72 4.500h4v4h-4zM74 8.500V16" />
      </svg>
      <Clock>10:30 PM<br />5/23/2026</Clock>
      <Notice width="18" height="18" viewBox="0 0 18 18" fill="none" stroke="#fff" strokeWidth="1.200">
        <path d="M1.500 2h15v12h-5.200L9 16.500 6.700 14H1.500z" />
      </Notice>
      <ShowDesktop />
    </Tray>
  </Taskbar>
)

const App = () => (
  <Screen>
    <GlobalStyle />
    <Rays width="1360" height="768" viewBox="0 0 1360 768">
      <defs>
        <linearGradient id="ray" x1="0" x2="1">
          <stop offset="0" stopColor="#35b4ff" stopOpacity="0" />
          <stop offset="1" stopColor="#2f9cff" stopOpacity=".14" />
        </linearGradient>
      </defs>
      <path d="M200 3 900 206H782V500z" fill="url(#ray)" />
      <path d="M200 3 905 208" stroke="#4db4ff" strokeOpacity=".22" strokeWidth="1.500" />
    </Rays>
    <Desktop />
    <Explorer />
    <AnyRun />
    <ContextMenu />
    <Bar />
  </Screen>
)

export default App
